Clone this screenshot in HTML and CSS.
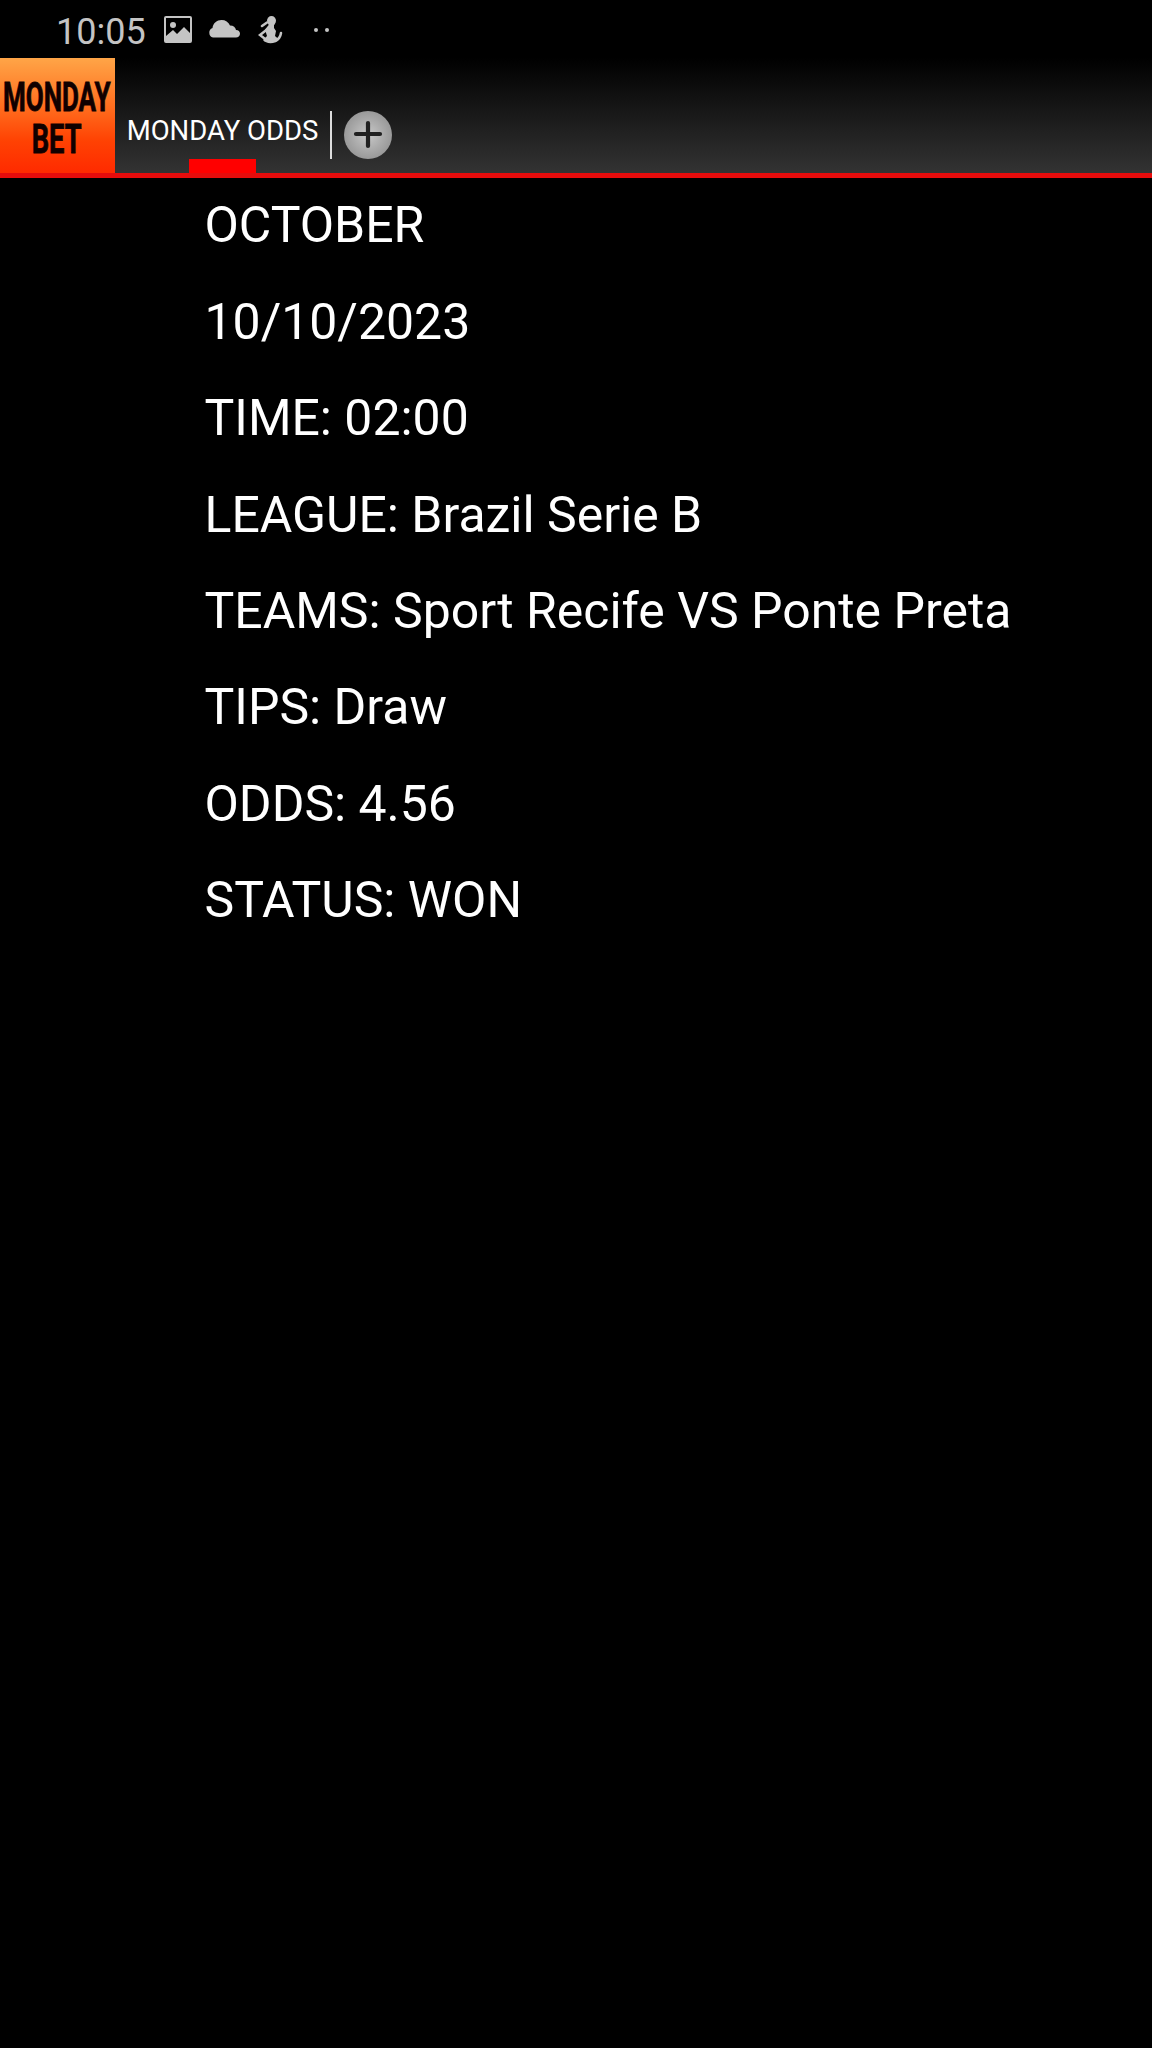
FILE: index.html
```html
<!DOCTYPE html>
<html lang="en">
<head>
    <meta charset="UTF-8">
    <meta name="viewport" content="width=device-width, initial-scale=1.0">
    <title>Monday Bet</title>
    <link rel="stylesheet" href="styles.css">
</head>
<body>

<div class="statusbar">
    <span class="clock">10:05</span>
    <svg class="icon-picture" width="28" height="28" viewBox="0 0 28 28">
        <path fill="#c4c4c4" fill-rule="evenodd" d="M2 0h24a2 2 0 0 1 2 2v23a2 2 0 0 1-2 2H2a2 2 0 0 1-2-2V2a2 2 0 0 1 2-2zM2 2v18l7-6 4 4 7-7 6 6V2z"/>
        <circle cx="9" cy="9" r="3" fill="#c4c4c4"/>
    </svg>
    <svg class="icon-cloud" width="32" height="18" viewBox="0 0 32 18">
        <path fill="#c4c4c4" d="M5 17.500a5 5 0 0 1-.5-9.500C5 3 9 0 13.500 0c4 0 7 2 8.500 5.500 3.500 0 5.500 2 6 4.500 2.500 0 4 1.700 4 3.700s-1.800 3.800-4 3.800z"/>
    </svg>
    <svg class="icon-figure" width="26" height="28" viewBox="0 0 26 28">
        <path fill="none" stroke="#c4c4c4" stroke-width="2.500" stroke-linecap="round" d="M4 10l5-3.500M9 13.500L2 19 9 24.500M17 25c3.500-1.500 5.500-4 6-8"/>
        <ellipse cx="13.500" cy="4.800" rx="4.500" ry="4.800" fill="#c4c4c4"/>
        <path fill="#c4c4c4" d="M11.500 8h4.500v4l2 3-1 5 4 3.500c-3 4.500-13 5-16 .5L9 20 7 13.500z"/>
    </svg>
    <span class="dot"></span>
    <span class="dot"></span>
</div>

<div class="header">
    <div class="logo">
        <span class="logo-top">MONDAY</span>
        <span class="logo-bottom">BET</span>
    </div>
    <div class="tab">
        <span class="tab-title">MONDAY ODDS</span>
        <div class="tab-marker"></div>
    </div>
    <div class="divider"></div>
    <svg class="add" width="48" height="48" viewBox="0 0 48 48">
        <defs>
            <radialGradient id="addFill">
                <stop offset="0" stop-color="#c8c8c8"/>
                <stop offset="1" stop-color="#999"/>
            </radialGradient>
        </defs>
        <circle cx="24" cy="24" r="24" fill="url(#addFill)"/>
        <path d="M24 12v23M12 23h24" stroke="#202020" stroke-width="4.200" stroke-linecap="round"/>
    </svg>
</div>

<div class="content">
    <p>OCTOBER</p>
    <p>10/10/2023</p>
    <p>TIME: 02:00</p>
    <p>LEAGUE: Brazil Serie B</p>
    <p>TEAMS: Sport Recife VS Ponte Preta</p>
    <p>TIPS: Draw</p>
    <p>ODDS: 4.56</p>
    <p>STATUS: WON</p>
</div>

</body>
</html>
```

FILE: styles.css
```css
body {
    margin: 0;
    min-height: 2048px;
    background-color: #000;
    color: #fff;
    font-family: Roboto, sans-serif;
}

.statusbar {
    display: flex;
    align-items: flex-start;
    height: 58px;
    padding-left: 56px;
    box-sizing: border-box;
    color: #c4c4c4;
}

.clock {
    width: 108px;
    padding-top: 11px;
    font-size: 36px;
    line-height: 42px;
}

.icon-picture {
    margin-top: 16px;
}

.icon-cloud {
    margin: 20px 0 0 16px;
}

.icon-figure {
    margin: 16px 30px 0 18px;
}

.dot {
    width: 4px;
    height: 4px;
    margin: 28px 7px 0 0;
    border-radius: 50%;
    background-color: #c4c4c4;
}

.header {
    display: flex;
    height: 115px;
    background: linear-gradient(#000, #333);
    border-bottom: 5px solid #e60c0c;
}

.logo {
    display: flex;
    flex-direction: column;
    align-items: center;
    width: 115px;
    padding: 19px 2px 0 0;
    box-sizing: border-box;
    background: linear-gradient(#ffa547, #ff6a1c 45%, #ff4203 72%, #ff2a00);
    color: #100000;
    font-size: 40px;
    font-weight: 700;
    line-height: 42px;
    -webkit-text-stroke: 0.8px #100000;
}

/* squeezed letters of the logo */
.logo-top {
    transform: scaleX(0.65);
}

.logo-bottom {
    transform: scaleX(0.68);
}

.tab {
    display: flex;
    flex-direction: column;
    align-items: center;
    justify-content: space-between;
    width: 215px;
}

.tab-title {
    padding-top: 56px;
    font-size: 27.5px;
    line-height: 34px;
    white-space: nowrap;
}

.tab-marker {
    width: 67px;
    height: 14px;
    background-color: #f00;
}

.divider {
    width: 2px;
    height: 48px;
    margin: 53px 12px 0 0;
    background-color: #ddd;
}

.add {
    margin-top: 53px;
}

.content {
    margin-top: -0.7px;
    padding-left: 204.5px;
}

.content p {
    margin: 0;
    font-size: 49.95px;
    line-height: 96.400px;
    white-space: nowrap;
}
```
